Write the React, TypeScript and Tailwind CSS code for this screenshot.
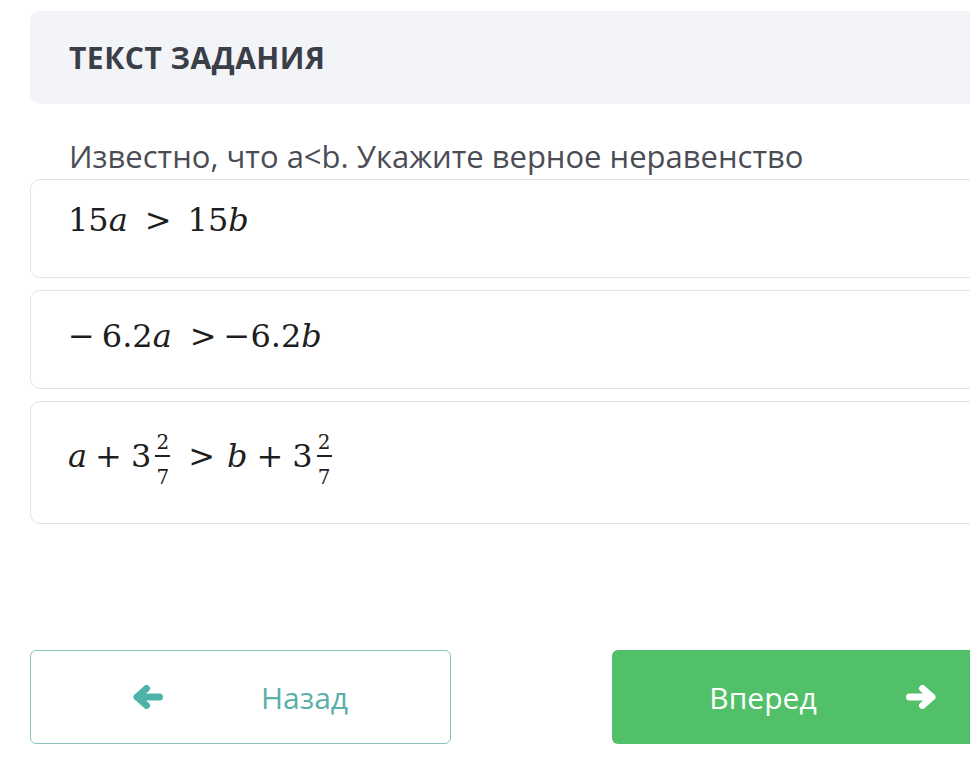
import React from "react";

const Frac = ({ n, d }: { n: string; d: string }) => (
  <span className="inline-flex flex-col items-center align-[18px] ml-[4px] text-[20px] leading-[20px]">
    <span>{n}</span>
    <span className="h-[1.5px] w-[15px] bg-[#222] mt-[3px]" />
    <span className="pt-[10px]">{d}</span>
  </span>
);

const Card = ({ children, pt, h }: { children: React.ReactNode; pt: string; h: string }) => (
  <div className={`border border-[#e3e3e3] rounded-[10px] pl-[37px] ${h} ${pt}`}>
    <div
      className="text-[32px] leading-[32px] text-[#1e1e1e] whitespace-nowrap"
      style={{ fontFamily: '"DejaVu Serif", serif' }}
    >
      {children}
    </div>
  </div>
);

const Arrow = ({ left, className }: { left?: boolean; className: string }) => (
  <svg viewBox="0 0 30 24" className={className} fill="none" stroke="currentColor" strokeWidth={7} strokeLinecap="round" strokeLinejoin="round">
    {left ? (
      <path d="M4 12H26.5M13.5 3.5L4 12l9.5 8.5" />
    ) : (
      <path d="M26 12H3.5M16.5 3.5L26 12l-9.5 8.5" />
    )}
  </svg>
);

export default function App() {
  return (
    <div className="w-[970px] h-[771px] overflow-hidden bg-white" style={{ fontFamily: '"Open Sans", sans-serif' }}>
      <div className="ml-[30px] w-[1003px] pt-[11px]">
        <div className="h-[93px] rounded-[10px] bg-[#f3f4f8] flex items-center pl-[39px]">
          <h1 className="text-[30px] font-bold text-[#3a3e47] tracking-[0.5px]">ТЕКСТ ЗАДАНИЯ</h1>
        </div>

        <p className="mt-[33px] pl-[39px] text-[31px] leading-[38px] text-[#4a4d55]">
          Известно, что a&lt;b. Укажите верное неравенство
        </p>

        <div className="mt-[4px] flex flex-col gap-[12px]">
          <Card h="h-[99px]" pt="pt-[24px]">
            15<i>a</i>
            <span className="ml-[17px]">&gt;</span>
            <span className="ml-[16px]">15</span>
            <i>b</i>
          </Card>
          <Card h="h-[99px]" pt="pt-[29px]">
            −<span className="ml-[7px]">6.2</span>
            <i>a</i>
            <span className="ml-[18px]">&gt;</span>
            <span className="ml-[7px]">−6.2</span>
            <i>b</i>
          </Card>
          <Card h="h-[123px]" pt="pt-[30px]">
            <i>a</i>
            <span className="ml-[8px]">+</span>
            <span className="ml-[9px]">3</span>
            <Frac n="2" d="7" />
            <span className="ml-[18px]">&gt;</span>
            <i className="ml-[12px]">b</i>
            <span className="ml-[9px]">+</span>
            <span className="ml-[9px]">3</span>
            <Frac n="2" d="7" />
          </Card>
        </div>

        <div className="mt-[126px] grid grid-cols-2 gap-[161px]">
          <button className="h-[94px] rounded-[6px] border border-[#8cc2be] flex items-center justify-center gap-[98px] text-[#5aafa7]">
            <Arrow left className="w-[30px] h-[24px] text-[#4db3a9]" />
            <span className="text-[30px] w-[88px]">Назад</span>
          </button>
          <button className="h-[94px] rounded-[6px] bg-[#52bf69] flex items-center justify-center gap-[89px] text-white">
            <span className="text-[30px]">Вперед</span>
            <Arrow className="w-[30px] h-[24px]" />
          </button>
        </div>
      </div>
    </div>
  );
}
